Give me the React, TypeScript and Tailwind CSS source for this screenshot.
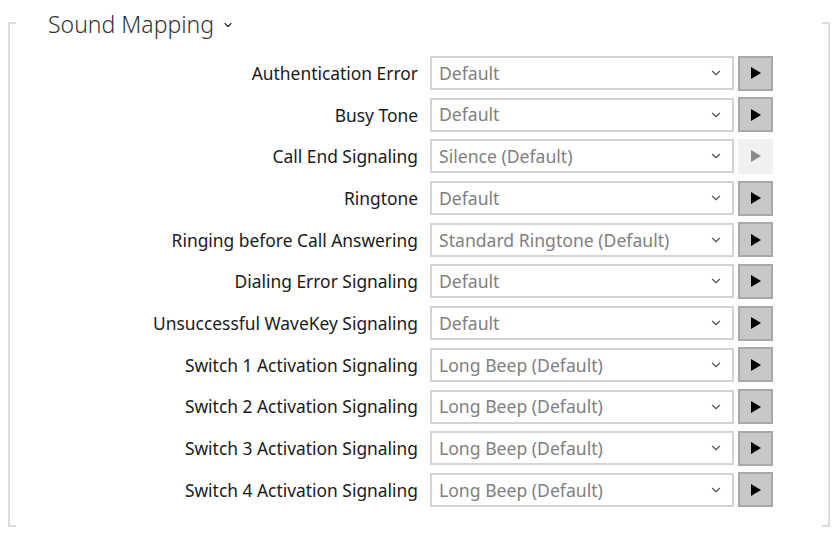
import { ChevronDown } from "lucide-react";

const rows = [
  { label: "Authentication Error", value: "Default", enabled: true },
  { label: "Busy Tone", value: "Default", enabled: true },
  { label: "Call End Signaling", value: "Silence (Default)", enabled: false },
  { label: "Ringtone", value: "Default", enabled: true },
  { label: "Ringing before Call Answering", value: "Standard Ringtone (Default)", enabled: true },
  { label: "Dialing Error Signaling", value: "Default", enabled: true },
  { label: "Unsuccessful WaveKey Signaling", value: "Default", enabled: true },
  { label: "Switch 1 Activation Signaling", value: "Long Beep (Default)", enabled: true },
  { label: "Switch 2 Activation Signaling", value: "Long Beep (Default)", enabled: true },
  { label: "Switch 3 Activation Signaling", value: "Long Beep (Default)", enabled: true },
  { label: "Switch 4 Activation Signaling", value: "Long Beep (Default)", enabled: true },
];

function PlayIcon({ color }: { color: string }) {
  return (
    <svg width="12" height="14" viewBox="0 0 12 14">
      <polygon points="1,1 11,7 1,13" fill={color} />
    </svg>
  );
}

export default function App() {
  return (
    <div
      className="w-[838px] h-[541px] bg-white pt-[22px] overflow-hidden"
      style={{ fontFamily: '"Noto Sans", "Open Sans", sans-serif' }}
    >
      {/* Frame */}
      <div className="relative ml-[8px] w-[822px] h-[505px] border-x-2 border-[#dcdcdc] flex flex-col">
        {/* corner ticks */}
        <span className="absolute -left-[2px] top-0 w-[8px] h-[2px] bg-[#dcdcdc]" />
        <span className="absolute -right-[2px] top-0 w-[8px] h-[2px] bg-[#dcdcdc]" />
        <span className="absolute -left-[2px] bottom-0 w-[8px] h-[2px] bg-[#dcdcdc]" />
        <span className="absolute -right-[2px] bottom-0 w-[8px] h-[2px] bg-[#dcdcdc]" />

        {/* Title */}
        <div className="-mt-[14px] ml-[38px] flex items-center gap-[8px] h-[32px]">
          <span className="text-[23px] text-[#333] font-light leading-none">Sound Mapping</span>
          <ChevronDown size={12} strokeWidth={2.5} className="text-[#333] mt-[2px]" />
        </div>

        {/* Rows */}
        <div className="mt-[16px] flex flex-col gap-[7.7px]">
          {rows.map((r) => (
            <div key={r.label} className="flex items-center h-[34px]">
              <div className="w-[420px] pr-[12px] text-right text-[17.4px] text-[#1a1a1a] whitespace-nowrap">
                {r.label}
              </div>
              <div className="w-[304px] h-[34px] border-2 border-[#d4d4d4] bg-white flex items-center justify-between pl-[7px] pr-[9px]">
                <span className="text-[17.6px] text-[#808080] whitespace-nowrap">{r.value}</span>
                <ChevronDown size={14} strokeWidth={2} className="text-[#555]" />
              </div>
              {r.enabled ? (
                <div className="ml-[4px] w-[35px] h-[35px] bg-[#c8c8c8] border-2 border-[#a9a9a9] flex items-center justify-center">
                  <PlayIcon color="#000" />
                </div>
              ) : (
                <div className="ml-[4px] w-[35px] h-[35px] bg-[#f0f0f0] flex items-center justify-center">
                  <PlayIcon color="#8a8a8a" />
                </div>
              )}
            </div>
          ))}
        </div>
      </div>
    </div>
  );
}
